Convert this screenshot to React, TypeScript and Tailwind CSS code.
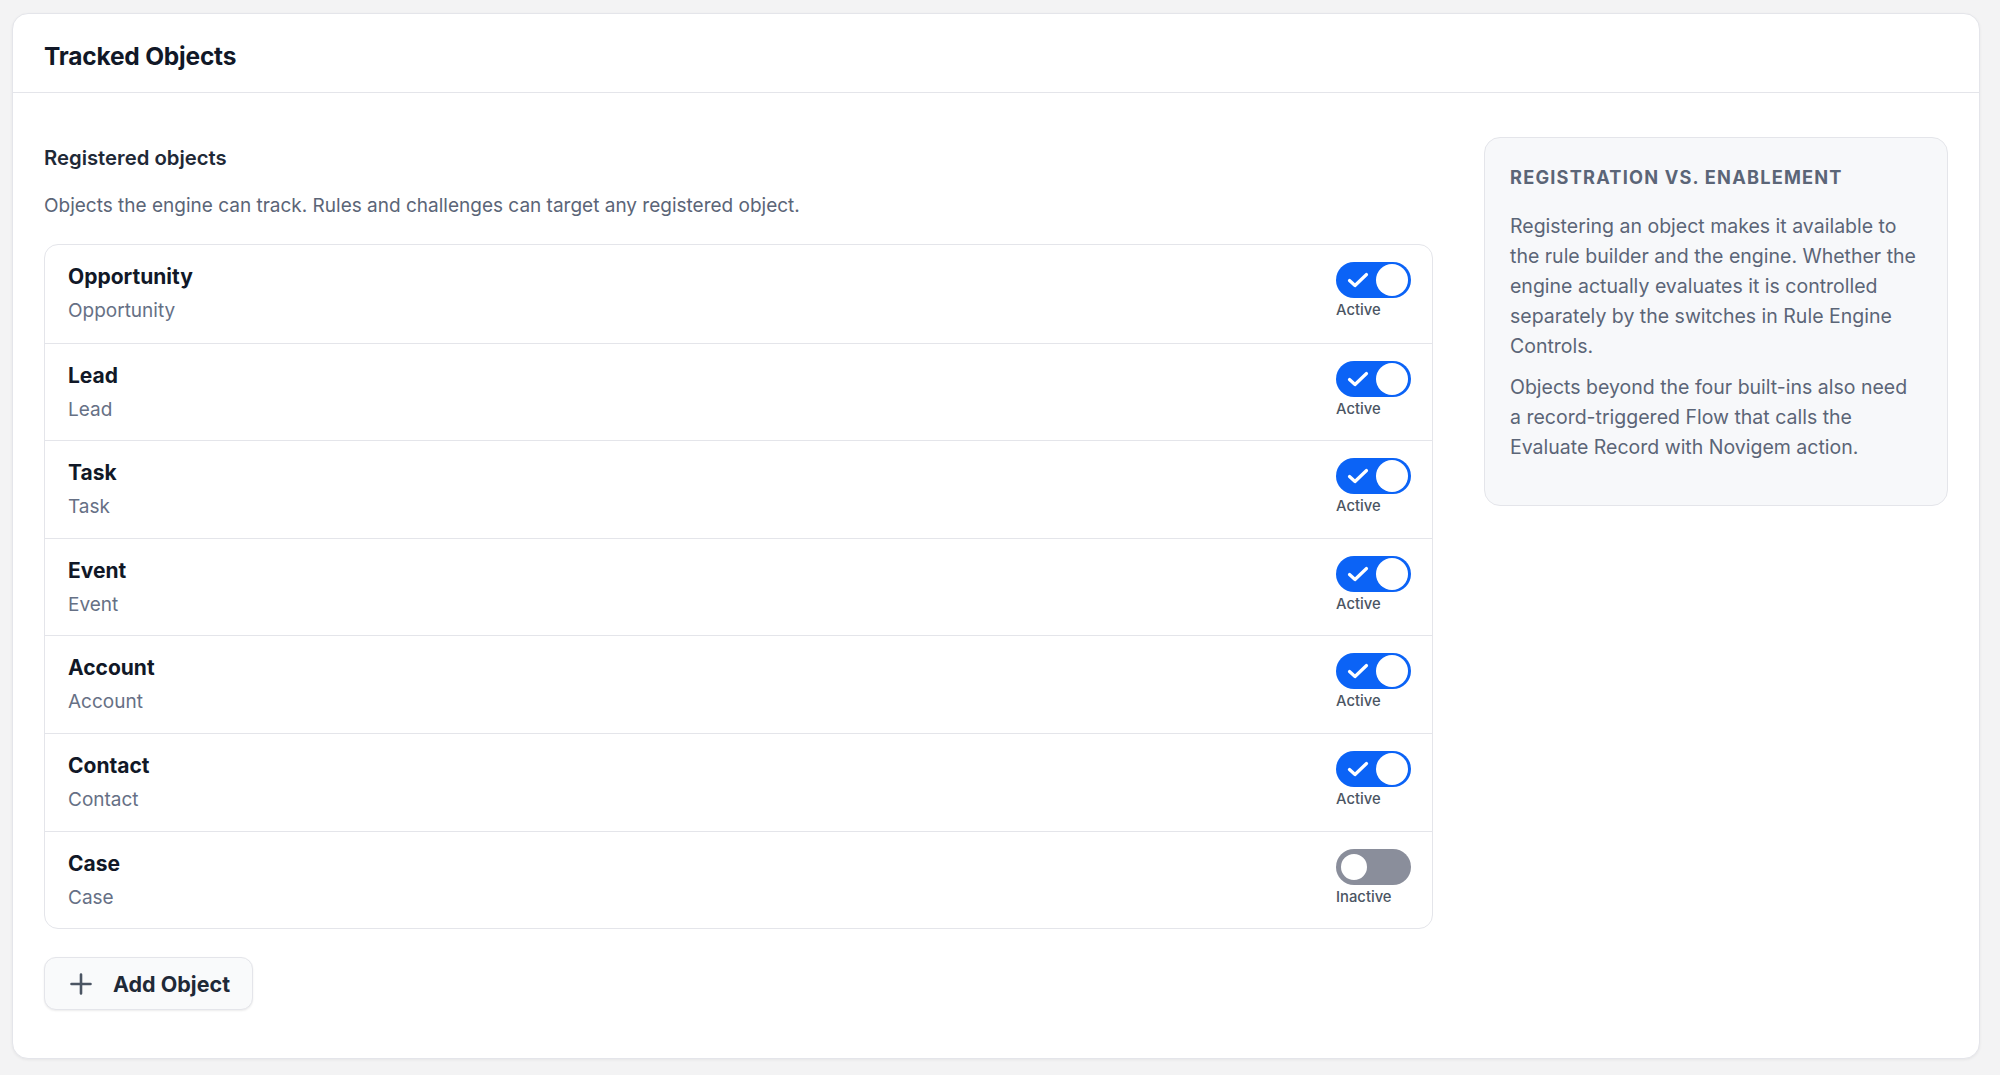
import React, { useState } from 'react';

type TrackedObject = {
  label: string;
  apiName: string;
  active: boolean;
};

const INITIAL_OBJECTS: TrackedObject[] = [
  { label: 'Opportunity', apiName: 'Opportunity', active: true },
  { label: 'Lead', apiName: 'Lead', active: true },
  { label: 'Task', apiName: 'Task', active: true },
  { label: 'Event', apiName: 'Event', active: true },
  { label: 'Account', apiName: 'Account', active: true },
  { label: 'Contact', apiName: 'Contact', active: true },
  { label: 'Case', apiName: 'Case', active: false },
];

const Toggle: React.FC<{ on: boolean; onChange: () => void }> = ({ on, onChange }) => (
  <button
    type="button"
    onClick={onChange}
    className={`relative h-[36px] w-[75px] rounded-full transition-colors ${on ? 'bg-[#0b63f6]' : 'bg-[#8a8e9b]'}`}
  >
    {on && (
      <svg className="absolute left-0 top-0 h-[36px] w-[75px]" viewBox="0 0 75 36" fill="none">
        <path d="M13.5 18.5l5.5 5L30.5 12.5" stroke="white" strokeWidth="3.2" strokeLinecap="round" strokeLinejoin="round" />
      </svg>
    )}
    <span
      className={`absolute top-[2px] h-[32px] w-[32px] rounded-full bg-white ${
        on ? 'left-[40px]' : 'left-[2px] border-[3px] border-[#8a8e9b]'
      }`}
    />
  </button>
);

const App: React.FC = () => {
  const [objects, setObjects] = useState<TrackedObject[]>(INITIAL_OBJECTS);

  const toggle = (index: number) => {
    setObjects(prev => prev.map((o, i) => (i === index ? { ...o, active: !o.active } : o)));
  };

  return (
    <div className="min-h-[1075px] bg-[#f3f3f4] pl-[12px] pr-[20px] pt-[13px] pb-[16px] font-['Inter',sans-serif] text-[#111827]">
      <div className="rounded-[16px] border border-[#e4e5ea] bg-white shadow-[0_1px_3px_rgba(0,0,0,0.06)]">
        <div className="flex h-[79px] items-center border-b border-[#e4e5ea] px-[31px] pt-[7px]">
          <h1 className="text-[24.5px] font-bold tracking-[-0.2px] text-[#111827]">Tracked Objects</h1>
        </div>

        <div className="flex gap-[51px] pl-[31px] pr-[31px] pt-[44px] pb-[48px]">
          <div className="flex-1 pt-[7px]">
            <h2 className="text-[20.3px] font-semibold leading-[28px] text-[#1f2937]">Registered objects</h2>
            <p className="mt-[21px] text-[19px] leading-[26px] text-[#5b6577]">
              Objects the engine can track. Rules and challenges can target any registered object.
            </p>

            <div className="mt-[25px] overflow-hidden rounded-[14px] border border-[#e4e5ea]">
              {objects.map((obj, i) => (
                <div
                  key={obj.apiName}
                  className={`flex h-[97.6px] items-start justify-between pl-[23px] pr-[21px] ${
                    i > 0 ? 'border-t border-[#e4e5ea]' : ''
                  }`}
                >
                  <div className="pt-[18px]">
                    <div className="text-[21px] font-bold leading-[28px] text-[#111827]">{obj.label}</div>
                    <div className="mt-[8px] text-[19px] leading-[24px] text-[#667085]">{obj.apiName}</div>
                  </div>
                  <div className="flex flex-col items-start pt-[17px]">
                    <Toggle on={obj.active} onChange={() => toggle(i)} />
                    <span className="mt-[3px] text-[14.8px] font-medium leading-[18px] text-[#4b5563]">
                      {obj.active ? 'Active' : 'Inactive'}
                    </span>
                  </div>
                </div>
              ))}
            </div>

            <button
              type="button"
              className="mt-[28px] flex h-[53px] items-center gap-[21px] rounded-[12px] border border-[#e4e5ea] bg-[#f9fafb] pl-[25px] pr-[22px] shadow-[0_1px_2px_rgba(0,0,0,0.08)]"
            >
              <svg className="h-[22px] w-[22px]" viewBox="0 0 22 22" fill="none">
                <path d="M11 1.5v19M1.5 11h19" stroke="#4b5563" strokeWidth="2.6" strokeLinecap="round" />
              </svg>
              <span className="text-[21.5px] font-bold text-[#1f2937]">Add Object</span>
            </button>
          </div>

          <aside className="h-fit w-[464px] shrink-0 rounded-[16px] border border-[#e4e5ea] bg-[#f7f8fa] pl-[25px] pr-[31px] pt-[27px] pb-[43px]">
            <h3 className="text-[18.2px] font-bold uppercase leading-[24px] tracking-[1.2px] text-[#5b6577]">
              Registration vs. Enablement
            </h3>
            <p className="mt-[22px] text-[19.5px] leading-[30px] text-[#5b6577]">
              Registering an object makes it available to the rule builder and the engine. Whether the engine
              actually evaluates it is controlled separately by the switches in Rule Engine Controls.
            </p>
            <p className="mt-[11px] text-[19.5px] leading-[30px] text-[#5b6577]">
              Objects beyond the four built-ins also need a record-triggered Flow that calls the Evaluate Record with
              Novigem action.
            </p>
          </aside>
        </div>
      </div>
    </div>
  );
};

export default App;
